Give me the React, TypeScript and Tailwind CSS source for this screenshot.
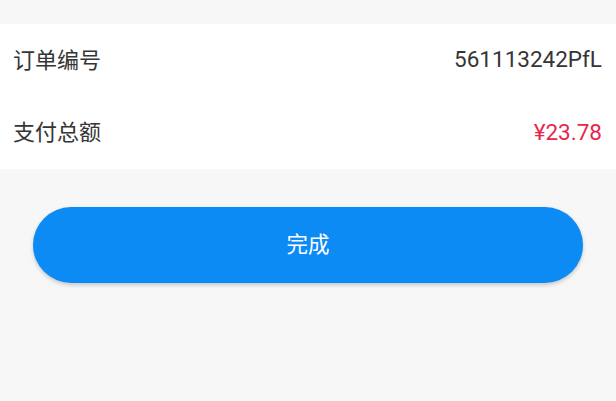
import React from 'react';

type Row = { label: string; value: string; accent?: boolean };

const rows: Row[] = [
  { label: '订单编号', value: '561113242PfL' },
  { label: '支付总额', value: '¥23.78', accent: true },
];

const InfoRow = ({ label, value, accent }: Row) => (
  <div className="flex h-[72.5px] items-center justify-between pl-[13px] pr-[14px]">
    <span className="text-[22px] text-[#353535]">{label}</span>
    <span className={`text-[22.5px] ${accent ? 'text-[#e8264b]' : 'text-[#353535]'}`}>
      {value}
    </span>
  </div>
);

export default function App() {
  return (
    <div
      className="min-h-[401px] w-full bg-[#f7f7f7] pt-[24px]"
      style={{ fontFamily: 'Roboto, "Noto Sans CJK SC", sans-serif' }}
    >
      <div className="bg-white">
        {rows.map((r) => (
          <InfoRow key={r.label} {...r} />
        ))}
      </div>

      <div className="px-[33px] pt-[38px]">
        <button className="flex h-[76px] w-full items-center justify-center rounded-full bg-[#0d8bf5] text-[21.5px] text-white shadow-[0_2px_4px_rgba(0,0,0,0.2)]">
          完成
        </button>
      </div>
    </div>
  );
}
